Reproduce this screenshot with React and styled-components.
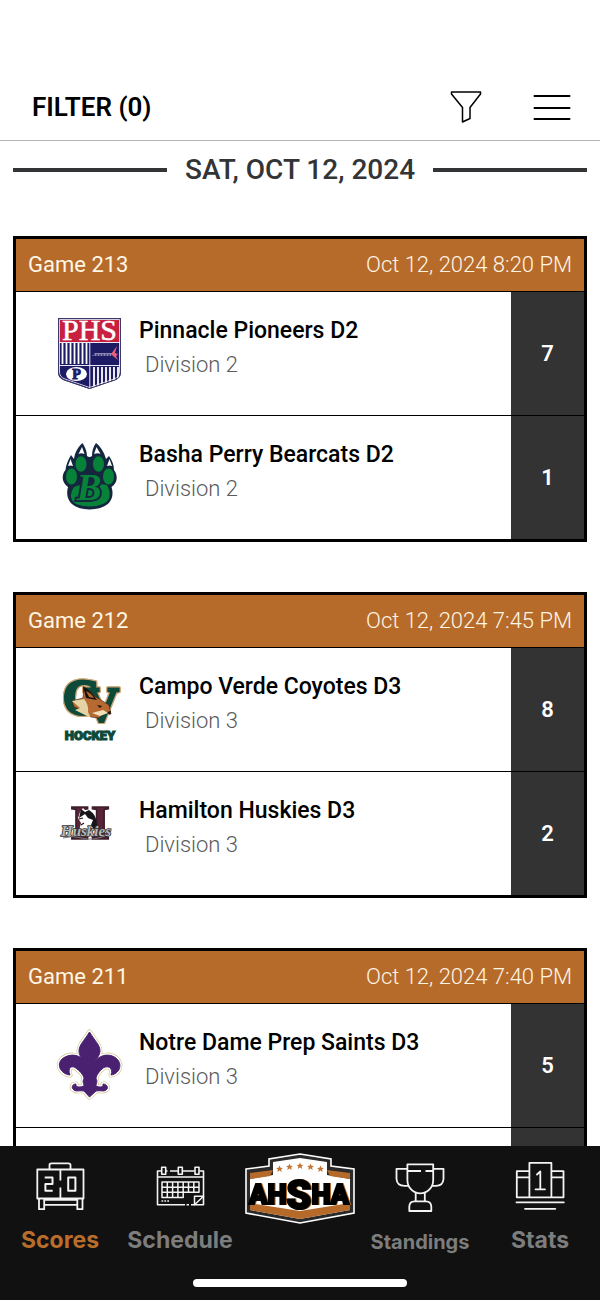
import React from 'react';
import styled, { createGlobalStyle } from 'styled-components';

const GlobalStyle = createGlobalStyle`
  * {
    box-sizing: border-box;
  }

  body {
    margin: 0;
    background: #ffffff;
    font-family: Roboto, 'Liberation Sans', sans-serif;
  }
`;

const Screen = styled.div`
  height: 100vh;
  display: flex;
  flex-direction: column;
`;

const TopBar = styled.header`
  display: flex;
  align-items: center;
  padding: 74px 28px 0 32px;
  border-bottom: 1px solid #b4b4b4;
`;

const FilterTitle = styled.h1`
  flex: 1;
  margin: 0;
  font-size: 26px;
  font-weight: 600;
  line-height: 66px;
  color: #000000;
`;

const IconButton = styled.button`
  display: flex;
  margin-left: 50px;
  padding: 0;
  border: 0;
  background: none;
  cursor: pointer;
`;

const Content = styled.main`
  flex: 1;
  min-height: 0;
  overflow-y: auto;
  scrollbar-width: none;
  padding: 0 13px;
`;

const DateHeading = styled.h2`
  display: flex;
  align-items: center;
  gap: 18px;
  margin: 0 0 37px;
  font-size: 28px;
  font-weight: 500;
  line-height: 58px;
  color: #333436;

  &::before,
  &::after {
    content: '';
    flex: 1;
    height: 4px;
    background: #333436;
  }
`;

const Card = styled.article`
  margin-bottom: 50px;
  border: 3px solid #000000;
`;

const CardHeader = styled.div`
  display: flex;
  justify-content: space-between;
  padding: 0 12px;
  font-size: 22px;
  line-height: 52px;
  color: #fff6e6;
  background: #b66b2a;
`;

const GameTime = styled.time`
  font-weight: 300;
`;

const TeamRow = styled.div`
  display: flex;
  height: 124px;
  border-top: 1px solid #000000;
`;

const TeamLogo = styled.div`
  display: flex;
  align-items: center;
  width: 80px;
  margin: 0 9px 0 34px;
`;

const TeamInfo = styled.div`
  flex: 1;
  padding-top: 22px;
  line-height: 34px;
`;

const TeamName = styled.div`
  font-size: 23px;
  font-weight: 500;
  color: #000000;
`;

const Division = styled.div`
  padding-left: 6px;
  font-size: 22px;
  font-weight: 300;
  color: #5a5a5a;
`;

const Score = styled.div`
  display: flex;
  align-items: center;
  justify-content: center;
  width: 73px;
  font-size: 22px;
  font-weight: 600;
  color: #ffffff;
  background: #333333;
`;

const BottomBar = styled.nav`
  height: 154px;
  background: #111111;
`;

const Tabs = styled.div`
  display: grid;
  grid-template-columns: repeat(5, 1fr);
  height: 133px;
`;

const Tab = styled.a`
  display: flex;
  flex-direction: column;
  align-items: center;
  padding-top: ${(props) => (props.$logo ? '7px' : '15px')};
  font-family: Inter, 'Liberation Sans', sans-serif;
  font-size: ${(props) => (props.$small ? '20px' : '23px')};
  font-weight: 700;
  text-decoration: none;
  color: ${(props) => (props.$active ? '#b96d2b' : '#7d7d7d')};
`;

const TabLabel = styled.span`
  margin-top: ${(props) => (props.$small ? '14px' : '12px')};
  line-height: 30px;
`;

const HomeIndicator = styled.div`
  width: 214px;
  height: 8px;
  margin: 0 auto;
  border-radius: 4px;
  background: #ffffff;
`;

const OutlinedLetters = styled.g`
  font-family: 'Liberation Serif', serif;
  font-weight: 700;
  fill: #0d4a3a;
  stroke: #0d4a3a;
  stroke-width: 3px;
  filter: drop-shadow(1px 0 0 #cfa878) drop-shadow(-1px 0 0 #cfa878) drop-shadow(0 1px 0 #cfa878)
    drop-shadow(0 -1px 0 #cfa878);
`;

const LeagueName = styled.text`
  font-family: Roboto, sans-serif;
  font-weight: 900;
  text-anchor: middle;
  fill: #000000;
  stroke: #000000;
  stroke-width: 2px;
  filter: drop-shadow(1px 0 0 #b66a2a);
`;

const FunnelIcon = () => (
  <svg width="32" height="34" viewBox="0 0 32 34" fill="none" stroke="#000" strokeWidth="1.5" strokeLinejoin="round">
    <path d="M1.5 2H30.5V4L20 17.5V28.5L12.5 32V17.5L1.5 4Z" />
  </svg>
);

const MenuIcon = () => (
  <svg width="40" height="28" viewBox="0 0 40 28" stroke="#000" strokeWidth="2" strokeLinecap="round">
    <path d="M2.5 3H37.5M2.5 15H37.5M2.5 26H37.5" />
  </svg>
);

const PioneersLogo = () => (
  <svg width="80" height="90" viewBox="0 0 80 90">
    <defs>
      <clipPath id="shield">
        <path d="M8 9H71V63Q71 69 65 71L39.5 80L14 71Q8 69 8 63Z" />
      </clipPath>
    </defs>
    <g clipPath="url(#shield)">
      <rect x="8" y="9" width="63" height="72" fill="#1d1b63" />
      <rect x="10" y="11" width="59" height="22" fill="#c9203f" />
      <path
        d="M12.5 34V55M16.5 34V55M20.5 34V55M24.5 34V55M28.5 34V55M32.5 34V55M36.5 34V55M44 58V79M48 58V77M52 58V76M56 58V75M60 58V73M64 58V71M68 58V70"
        stroke="#fff"
        strokeWidth="1.8"
      />
      <path d="M9 33.5H70M9 56.5H70M39.8 34V80" stroke="#e9e9f5" strokeWidth="1" />
      <ellipse cx="26.5" cy="65" rx="10.5" ry="7" fill="#fff" />
      <path d="M42 47L45 44H62L61 47Z" fill="#8c86b1" />
      <path d="M61 45L67 37L65 44L68 45L66 47L68 51L63 47Z" fill="#e5617a" />
      <path d="M43 46H60" stroke="#1d1b63" strokeWidth="1" strokeDasharray="2 1" />
    </g>
    <path d="M9.5 10.5H69.5V63Q69.5 68 64 70L39.5 78.5L15 70Q9.5 68 9.5 63Z" fill="none" stroke="#fff" strokeWidth="0.8" />
    <path d="M8.5 9.5H70.5V63Q70.5 69 65 71L39.5 79.5L14 71Q8.5 69 8.5 63Z" fill="none" stroke="#3d3869" strokeWidth="1" />
    <text x="39.5" y="31" textAnchor="middle" fontFamily="Liberation Serif, serif" fontSize="30" fill="#fff" stroke="#fff" strokeWidth="0.5">PHS</text>
    <text x="26.5" y="70" textAnchor="middle" fontFamily="Liberation Serif, serif" fontSize="14" fontWeight="700" fill="#1d1b63" stroke="#1d1b63">P</text>
  </svg>
);

const BearcatsLogo = () => (
  <svg width="80" height="90" viewBox="0 0 80 90">
    <path
      d="M32.5 10C28 14 25 19 24 26L21 22C18 27 16 32 15.5 37C11 42 12 50 18 54C15 65 20 76 39.5 76.5C60 76 65 65 61.5 54C68 50 68 42 64 37C64 32 62 27 59 23L56 26C54 19 51 14 46 10C43 14 42 18 42 23Q39.5 25 37 23C37 18 35 14 32.5 10Z"
      fill="#14273f"
    />
    <path
      d="M32 14L28.5 21Q31 19.5 34.5 21ZM46.5 14L44 21Q48 19.5 50.5 21ZM20.5 26L18 33Q20.5 32 23 33ZM59.5 26L57 33Q60 32 62 33Z"
      fill="#fff"
    />
    <g fill="#078239">
      <ellipse cx="21.5" cy="43.5" rx="5.5" ry="8" />
      <ellipse cx="31" cy="31" rx="5.5" ry="7.8" />
      <ellipse cx="48.5" cy="31" rx="5.5" ry="7.8" />
      <ellipse cx="58.5" cy="43.5" rx="5.5" ry="8" />
      <path d="M24 54Q40 48 57 52Q64 66 53 71Q40 76 26 71Q17 65 24 54Z" />
    </g>
    <text x="39" y="67" textAnchor="middle" fontFamily="Liberation Serif, serif" fontSize="37" fontWeight="700" fontStyle="italic" fill="#078239" stroke="#14273f" strokeWidth="4" paintOrder="stroke">B</text>
  </svg>
);

const CoyotesLogo = () => (
  <svg width="80" height="90" viewBox="0 0 80 90">
    <OutlinedLetters>
      <text x="34" y="56" fontSize="48">V</text>
      <text x="13" y="49" fontSize="50">C</text>
    </OutlinedLetters>
    <path d="M34 22L46 32L59 40L61 49L54 48L49 53L41 52L34 46L24 42L22 36L33 33Z" fill="#b66a32" stroke="#3a2015" strokeWidth="0.6" />
    <path d="M33 21L36 33L47 35Q41 26 33 21Z" fill="#16110e" />
    <path d="M36 26L39 32L44 33Q41 28 36 26Z" fill="#b66a32" />
    <path d="M22 36L34 34Q39 40 38 47L41 53L33 49L25 45L30 43Z" fill="#e5d3a5" />
    <path d="M47 40L52 41L50 43ZM57 47L61 46L60 50Z" fill="#16110e" />
    <path d="M42 48L53 45L58 48L50 51Z" fill="#efe0ba" />
    <text x="40" y="75" textAnchor="middle" fontFamily="Roboto, sans-serif" fontSize="13" fontWeight="900" fill="#0d4a3a" stroke="#0d4a3a" strokeWidth="1.2">HOCKEY</text>
  </svg>
);

const HuskiesLogo = () => (
  <svg width="80" height="90" viewBox="0 0 80 90">
    <text x="40" y="50" textAnchor="middle" fontFamily="Liberation Serif, serif" fontSize="49" fontWeight="700" fill="#572438" stroke="#3d1a29" strokeWidth="1.6">H</text>
    <path d="M30 23L33 19L36 22L40 22L45 29L43 37L47 42H29L31 34L28 29Z" fill="#fff" />
    <path d="M31 20L35 23L39 21Q47 26 47 36L44 41L41 36L43 31L38 29L35 25L32 27L29 29Z" fill="#17171b" />
    <path d="M29 30L33 29M34 34L31 36" stroke="#17171b" strokeWidth="1.2" />
    <text x="36" y="47" textAnchor="middle" fontFamily="Liberation Serif, serif" fontSize="15" fontWeight="700" fontStyle="italic" fill="#b7b7b7" stroke="#333" strokeWidth="1.6" paintOrder="stroke">Huskies</text>
    <path d="M13 49Q22 46 32 49T55 47" fill="none" stroke="#77777a" strokeWidth="1" />
  </svg>
);

const fleur =
  'M39.5 11C45 20 50 24 50 30C50 34 47 37 45 40C52 32 62 33 67 38C73 44 69 53 61 54C64 47 57 43 52 48C48 52 46 55 46 58C48 60 46 63 46 65C50 67 54 66 53 63C57 63 59 67 56 69C54 71 50 69 46 70L39.5 76L34 70C30 69 26 71 24 69C21 67 22 63 26 63C25 66 29 67 34 65C34 63 32 60 34 58C34 55 31 51 27 48C22 43 17 47 20 54C11 53 6 44 12 38C18 33 28 32 35 40C31 37 29 34 29 30C29 24 34 20 39.5 11Z';

const SaintsLogo = () => (
  <svg width="80" height="90" viewBox="0 0 80 90">
    <path d={fleur} fill="#4a2071" stroke="#cfc485" strokeWidth="5" strokeLinejoin="round" />
    <path d={fleur} fill="#4a2071" stroke="#ffffff" strokeWidth="3.8" strokeLinejoin="round" />
    <path d={fleur} fill="#4a2071" stroke="#4a2071" strokeWidth="1" />
  </svg>
);

const TabIcon = ({ children }) => (
  <svg width="50" height="52" viewBox="0 0 50 52" fill="none" stroke="#f4f4f4" strokeWidth="1.8" strokeLinejoin="round">
    {children}
  </svg>
);

const ScoresIcon = () => (
  <TabIcon>
    <path d="M2.3 8.5H48.5V37.5H2.3ZM14.5 8V4Q14.5 2.3 16.5 2.3H33.5Q35.5 2.3 35.5 4V8M25.4 9V19.5M25.4 26.5V37" />
    <path d="M4 37.5V48.2H9.2V37.5M42.3 37.5V48.2H47.5V37.5M9.5 43.8H42M9.5 38.8H42" />
    <path d="M9.7 16.5H17.5V23H10.4V29.8H17.7M33.2 16.5H40.4V29.8H33.2Z" strokeWidth="2" />
  </TabIcon>
);

const ScheduleIcon = () => (
  <TabIcon>
    <path d="M6.5 10H2.5V43.7H30M36 43.7H48.5V10H44.5M11 10H12.5M15 10H23M27.5 10H39.5M2.5 16H48.5M31.5 43.7H34" strokeWidth="1.6" />
    <path d="M6.7 6.3H10.7V13.3H6.7ZM23.3 6.3H27.3V13.3H23.3ZM40 6.3H44V13.3H40Z" strokeWidth="1.6" />
    <path d="M7 21H44V31.3H7ZM7 26.2H44M7 31.3V36.4H28.2V21M12.3 21V36.4M17.6 21V36.4M22.9 21V36.4M33.5 21V31.3M38.8 21V31.3" strokeWidth="1.5" />
    <path d="M39.5 43.7V35.2H48.5ZM39.5 43.7L48.5 35.2" strokeWidth="1.5" />
    <path d="M6.5 40H14" strokeWidth="1.6" strokeDasharray="1.7 1.2" />
  </TabIcon>
);

const StandingsIcon = () => (
  <TabIcon>
    <path d="M12.4 3.3H38.2V19C38.2 27 32 32.4 25.3 32.4S12.4 27 12.4 19ZM12.4 7.8H1.5V18Q2 25 10 24.8H14M38.2 7.8H48.5V18Q48 25 40.5 24.8H37" />
    <path d="M20.7 32V40.4M29.8 32V40.4M14.3 50V45.5Q14.5 40.5 19.5 40.4H31Q36 40.5 36.3 45.5V50ZM13 10H26M30.5 10H38" />
  </TabIcon>
);

const StatsIcon = () => (
  <TabIcon>
    <path d="M14.4 1.8H36.4V36.3H14.4ZM14.4 10.2H1.8V36.3H14.4M36.4 10.2H48.5V36.3H36.4M1.8 16.3H14.4M36.4 16.3H48.5" />
    <path d="M1.5 41.4H48.8M10 47.8H40.3M20.5 28.3H30M25.3 28.3V10.3L22 13.5" strokeLinecap="round" />
  </TabIcon>
);

const star = 'l1 2.2 2.4 .2-1.8 1.6.6 2.4-2.2-1.3-2.2 1.3.6-2.4-1.8-1.6 2.4-.2z';

const LeagueLogo = () => (
  <svg width="110" height="71" viewBox="0 0 110 71">
    <path d="M1 16L24 13V6L55 1L86 6V13L109 16V60L55 70L1 60Z" fill="#2b2a2b" stroke="#fff" strokeWidth="1.6" />
    <path d="M5 26L28 22V9L55 5L82 9V22L105 26V57L55 66L5 57Z" fill="#fff" />
    <path d="M5 20L28 17L25 23L5 26ZM105 20L82 17L85 23L105 26ZM5 50L55 58L105 50V57L55 66L5 57Z" fill="#b66a2a" />
    <path d={`M34.5 12.5${star}M44.5 10.5${star}M55 9.5${star}M65.5 10.5${star}M75.5 12.5${star}`} fill="#c47635" />
    <LeagueName x="54" y="51" fontSize="27">
      AH<tspan fontSize="40" dy="5">S</tspan><tspan dy="-5">HA</tspan>
    </LeagueName>
  </svg>
);

const games = [
  {
    id: 213,
    time: 'Oct 12, 2024 8:20 PM',
    teams: [
      { name: 'Pinnacle Pioneers D2', division: 'Division 2', score: 7, Logo: PioneersLogo },
      { name: 'Basha Perry Bearcats D2', division: 'Division 2', score: 1, Logo: BearcatsLogo },
    ],
  },
  {
    id: 212,
    time: 'Oct 12, 2024 7:45 PM',
    teams: [
      { name: 'Campo Verde Coyotes D3', division: 'Division 3', score: 8, Logo: CoyotesLogo },
      { name: 'Hamilton Huskies D3', division: 'Division 3', score: 2, Logo: HuskiesLogo },
    ],
  },
  {
    id: 211,
    time: 'Oct 12, 2024 7:40 PM',
    teams: [
      { name: 'Notre Dame Prep Saints D3', division: 'Division 3', score: 5, Logo: SaintsLogo },
      {},
    ],
  },
];

const GameCard = ({ game }) => (
  <Card>
    <CardHeader>
      <span>Game {game.id}</span>
      <GameTime>{game.time}</GameTime>
    </CardHeader>
    {game.teams.map(({ name, division, score, Logo }, index) => (
      <TeamRow key={index}>
        <TeamLogo>{Logo && <Logo />}</TeamLogo>
        <TeamInfo>
          <TeamName>{name}</TeamName>
          <Division>{division}</Division>
        </TeamInfo>
        <Score>{score}</Score>
      </TeamRow>
    ))}
  </Card>
);

const App = () => (
  <Screen>
    <GlobalStyle />
    <TopBar>
      <FilterTitle>FILTER (0)</FilterTitle>
      <IconButton type="button" aria-label="Filter">
        <FunnelIcon />
      </IconButton>
      <IconButton type="button" aria-label="Menu">
        <MenuIcon />
      </IconButton>
    </TopBar>
    <Content>
      <DateHeading>SAT, OCT 12, 2024</DateHeading>
      {games.map((game) => (
        <GameCard key={game.id} game={game} />
      ))}
    </Content>
    <BottomBar>
      <Tabs>
        <Tab href="#scores" $active>
          <ScoresIcon />
          <TabLabel>Scores</TabLabel>
        </Tab>
        <Tab href="#schedule">
          <ScheduleIcon />
          <TabLabel>Schedule</TabLabel>
        </Tab>
        <Tab href="#home" aria-label="Home" $logo>
          <LeagueLogo />
        </Tab>
        <Tab href="#standings" $small>
          <StandingsIcon />
          <TabLabel $small>Standings</TabLabel>
        </Tab>
        <Tab href="#stats">
          <StatsIcon />
          <TabLabel>Stats</TabLabel>
        </Tab>
      </Tabs>
      <HomeIndicator />
    </BottomBar>
  </Screen>
);

export default App;
